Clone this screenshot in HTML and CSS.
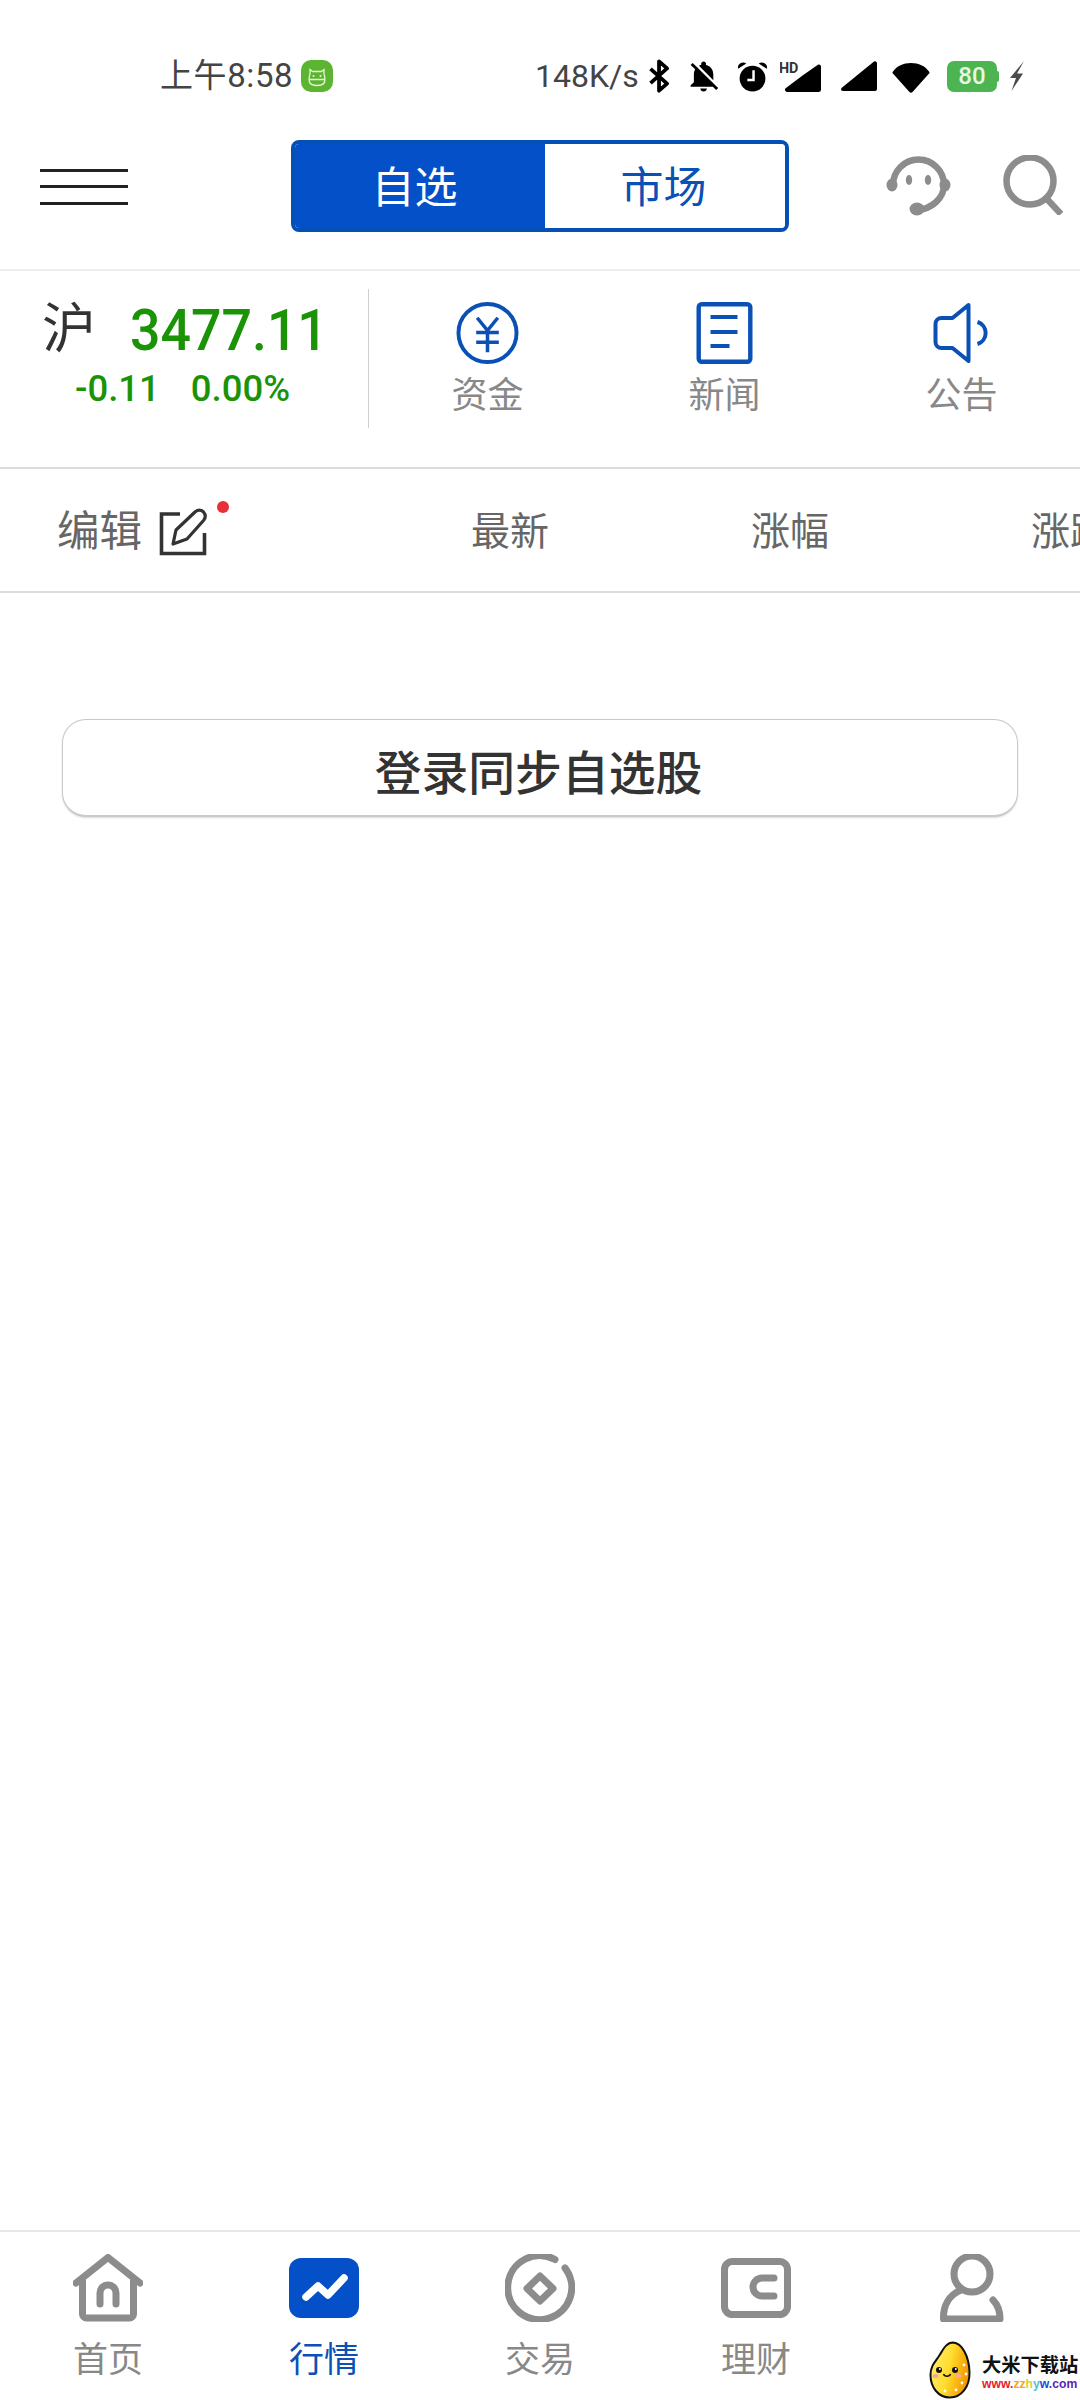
FILE: index.html
```html
<!DOCTYPE html>
<html lang="zh-CN">
<head>
<meta charset="utf-8">
<title>行情</title>
<link rel="stylesheet" href="styles.css">
</head>
<body>
<div class="page">
  <div class="status">
    <span class="time">上午8:58</span>
    <svg class="app-badge" viewBox="0 0 32 32">
      <rect width="32" height="32" rx="10" fill="#5cb531"/>
      <path d="M9 9.500l2.500 2h9l2.500-2v5c1.200 2 1.200 7 0 8.500-1.500 2-3.500 2.500-7 2.500s-5.500-.5-7-2.500c-1.200-1.500-1.200-6.500 0-8.500z M7.800 19.500h16.400" fill="none" stroke="#e8f6d8" stroke-width="1.300"/>
      <circle cx="12.500" cy="16" r="1" fill="#e8f6d8"/><circle cx="19.500" cy="16" r="1" fill="#e8f6d8"/>
    </svg>
    <span class="speed">148K/s</span>
    <svg class="si si-bt" viewBox="0 0 24 36"><path d="M2.500 10.500L20 26l-8.500 7.500V2.500L20 10 2.500 25.500" fill="none" stroke="#000" stroke-width="4" stroke-linejoin="round"/></svg>
    <svg class="si si-bell" viewBox="3 1.500 18.500 21.500" preserveAspectRatio="none"><path d="M20 18.690L7.840 6.140 5.270 3.490 4 4.760l2.800 2.800v.01c-.52.99-.8 2.160-.8 3.420v5l-2 2v1h13.730l2 2L21 19.720l-1-1.030zM12 22c1.110 0 2-.89 2-2h-4c0 1.110.89 2 2 2zm6-7.320V11c0-3.080-1.640-5.640-4.500-6.320V4c0-.83-.67-1.500-1.500-1.500s-1.500.67-1.500 1.500v.68c-.15.03-.29.08-.42.12-.1.03-.2.07-.3.11h-.01c-.2.08-.4.17-.59.27-.01 0-.01 0-.02.01L18 14.680z"/></svg>
    <svg class="si si-alarm" viewBox="0 0 30 32">
      <circle cx="15" cy="18" r="12.500"/>
      <path d="M1 8.500a5 5 0 0 1 8-5zM29 8.500a5 5 0 0 0-8-5z"/>
      <path d="M16 10v9.500h-6" fill="none" stroke="#fff" stroke-width="2.400"/>
    </svg>
    <svg class="si si-hd" viewBox="0 0 40 32">
      <path d="M37 4.500a2 2 0 0 1 3 1.500V29a2 2 0 0 1-2 2H7c-2 0-3-2-1.500-3.500L22 15z" fill="#000"/>
      <text x="-1" y="13" class="hd-text">HD</text>
    </svg>
    <svg class="si si-sig" viewBox="0 0 36 32"><path d="M33 1.500a2 2 0 0 1 3 1.500v26a2 2 0 0 1-2 2H2c-2 0-2.500-2-1.200-3.300z"/></svg>
    <svg class="si si-wifi" viewBox="0 0 37 32"><path d="M.8 11.300C5 5.500 11 2.800 18.500 2.800s13.500 2.700 17.700 8.500c.5.700.4 1.300-.1 1.900L20 31c-.9 1-2.100 1-3 0L.9 13.200c-.5-.6-.6-1.200-.1-1.900z"/></svg>
    <span class="battery"><span class="battery-num">80</span></span>
    <svg class="si si-bolt" viewBox="0 0 18 32"><path d="M17 1L3 18h6l-4.500 13L16 13.500h-6z" fill="#4a4a4a"/></svg>
  </div>

  <header class="topbar">
    <div class="burger"><i></i><i></i><i></i></div>
    <div class="segment">
      <span class="seg seg-on">自选</span>
      <span class="seg seg-off">市场</span>
    </div>
    <svg class="headset" viewBox="0 0 65 63">
      <path d="M7 32A25.500 25.500 0 1 1 58 32C58 45 46 56 31 57" fill="none" stroke="#8c8c8c" stroke-width="6.500"/>
      <ellipse cx="6" cy="32" rx="5.500" ry="6.500" fill="#8c8c8c"/>
      <ellipse cx="59" cy="32" rx="5.500" ry="6.500" fill="#8c8c8c"/>
      <ellipse cx="31" cy="56" rx="7.500" ry="6.500" fill="#8c8c8c"/>
      <ellipse cx="23" cy="27" rx="3.200" ry="5" fill="#8c8c8c"/>
      <ellipse cx="42" cy="27" rx="3.200" ry="5" fill="#8c8c8c"/>
    </svg>
    <svg class="search" viewBox="0 0 60 60">
      <circle cx="27" cy="26" r="23.500" fill="none" stroke="#8c8c8c" stroke-width="6.500"/>
      <path d="M44 44l14 15" fill="none" stroke="#8c8c8c" stroke-width="6.500"/>
    </svg>
  </header>

  <section class="index-row">
    <div class="index-box">
      <div class="index-top"><span class="index-name">沪</span><span class="index-value">3477.11</span></div>
      <div class="index-change"><span class="chg">-0.11</span><span class="chg">0.00%</span></div>
    </div>
    <div class="shortcut">
      <svg class="sc-icon" viewBox="0 0 63 63">
        <circle cx="31.500" cy="31.500" r="29.500" fill="none" stroke="#0a50b5" stroke-width="4"/>
        <path d="M21 16l10.500 13L42 16M20 31h23M20 41h23M31.500 30v21" fill="none" stroke="#0a50b5" stroke-width="3.600"/>
      </svg>
      <span class="sc-label">资金</span>
    </div>
    <div class="shortcut">
      <svg class="sc-icon" viewBox="0 0 56 62">
        <rect x="2.200" y="2.200" width="51.600" height="57.600" rx="3" fill="none" stroke="#0a50b5" stroke-width="4.400"/>
        <path d="M14 15h27M14 30h27M14 44h19" fill="none" stroke="#0a50b5" stroke-width="3.800"/>
      </svg>
      <span class="sc-label">新闻</span>
    </div>
    <div class="shortcut">
      <svg class="sc-icon" viewBox="0 0 56 62">
        <path d="M35 3L19 16H8a6 6 0 0 0-6 6v18a6 6 0 0 0 6 6H19L35 59z" fill="none" stroke="#0a50b5" stroke-width="4" stroke-linejoin="round"/>
        <path d="M44 20a11.500 11.500 0 0 1 0 22" fill="none" stroke="#0a50b5" stroke-width="4"/>
      </svg>
      <span class="sc-label">公告</span>
    </div>
  </section>

  <nav class="columns">
    <div class="col-edit">
      <span class="edit-label">编辑</span>
      <span class="edit-icon-wrap">
        <svg class="edit-icon" viewBox="0 0 48 48">
          <path d="M21 6H2.500V45.500H45.500V25" fill="none" stroke="#333" stroke-width="3.600"/>
          <path d="M14 36l3-14L36 4c3-2.500 6-2.500 8.500 0 2.500 3 2.500 5.500 0 8.500L28 31z" fill="none" stroke="#333" stroke-width="3.200" stroke-linejoin="round"/>
        </svg>
        <i class="red-dot"></i>
      </span>
    </div>
    <span class="col">最新</span>
    <span class="col">涨幅</span>
    <span class="col">涨跌</span>
  </nav>

  <main class="content">
    <button class="sync-btn">登录同步自选股</button>
  </main>

  <footer class="tabbar">
    <div class="tab">
      <svg class="tab-icon" viewBox="0 0 70 68">
        <path d="M3 29L35 3.500 67 29" fill="none" stroke="#8c8c8c" stroke-width="7" stroke-linejoin="round" stroke-linecap="round"/>
        <path d="M9.500 26V60a4 4 0 0 0 4 4h43a4 4 0 0 0 4-4V26" fill="none" stroke="#8c8c8c" stroke-width="7"/>
        <path d="M27 50V39a8 8 0 0 1 16 0V50" fill="none" stroke="#8c8c8c" stroke-width="7" stroke-linecap="round"/>
      </svg>
      <span class="tab-label">首页</span>
    </div>
    <div class="tab tab-on">
      <svg class="tab-icon" viewBox="0 0 70 68">
        <rect y="4" width="70" height="60" rx="12" fill="#0450c8"/>
        <path d="M17 43L29 32 39 41 55 24" fill="none" stroke="#fff" stroke-width="7.500" stroke-linecap="round" stroke-linejoin="round"/>
      </svg>
      <span class="tab-label">行情</span>
    </div>
    <div class="tab">
      <svg class="tab-icon" viewBox="0 0 70 68">
        <path d="M50 5.500A32 32 0 1 0 60 14" fill="none" stroke="#8c8c8c" stroke-width="7" stroke-linecap="round"/>
        <path d="M35 22L48 34.500 35 47 22 34.500z" fill="none" stroke="#8c8c8c" stroke-width="7" stroke-linejoin="round"/>
      </svg>
      <span class="tab-label">交易</span>
    </div>
    <div class="tab">
      <svg class="tab-icon" viewBox="0 0 70 68">
        <rect x="3.500" y="7.500" width="63" height="53" rx="8" fill="none" stroke="#8c8c8c" stroke-width="7"/>
        <path d="M53 24H41a9 9 0 0 0 0 18H53" fill="none" stroke="#8c8c8c" stroke-width="7" stroke-linecap="round"/>
      </svg>
      <span class="tab-label">理财</span>
    </div>
    <div class="tab">
      <svg class="tab-icon" viewBox="0 0 70 68">
        <circle cx="35" cy="20" r="18" fill="none" stroke="#8c8c8c" stroke-width="7"/>
        <path d="M24 36C12 41 6 52 6.500 65H63C63 57 60 50 56 46" fill="none" stroke="#8c8c8c" stroke-width="7" stroke-linecap="round" stroke-linejoin="round"/>
      </svg>
    </div>
  </footer>

  <div class="watermark">
    <svg class="mango" viewBox="0 0 42 58">
      <defs>
        <linearGradient id="mg" x1="0" y1="0" x2="1" y2="0.300">
          <stop offset="0" stop-color="#fff27a"/>
          <stop offset="0.550" stop-color="#ffdd2e"/>
          <stop offset="1" stop-color="#f59d00"/>
        </linearGradient>
      </defs>
      <path d="M24 1.500C33 2 40 15 40.500 31 41 46 32 56.500 21 56.500 9 56.500 1.500 46 1.500 34 1.500 25 6 21 10 15 14 9 17 1.500 24 1.500z" fill="url(#mg)" stroke="#111" stroke-width="2"/>
      <circle cx="10" cy="29" r="3" fill="#111"/><circle cx="26" cy="29" r="3" fill="#111"/>
      <circle cx="10.800" cy="28" r="1" fill="#fff"/><circle cx="26.800" cy="28" r="1" fill="#fff"/>
      <path d="M14.500 33c1 3 6 3 7 0" fill="none" stroke="#111" stroke-width="1.600"/>
      <ellipse cx="6.500" cy="35" rx="3" ry="2" fill="#f7a7a0"/><ellipse cx="29.500" cy="35" rx="3" ry="2" fill="#f7a7a0"/>
      <circle cx="35" cy="24" r="1.400" fill="#fff"/><circle cx="37" cy="33" r="1.400" fill="#fff"/>
      <circle cx="33" cy="42" r="1.400" fill="#fff"/><circle cx="27" cy="49" r="1.400" fill="#fff"/><circle cx="16" cy="50" r="1.400" fill="#fff"/>
    </svg>
    <div class="wm-text">
      <span class="wm-title">大米下载站</span>
      <span class="wm-url"><b class="u1">www.</b><b class="u2">zz</b><b class="u3">h</b><b class="u4">y</b><b class="u5">w</b><b class="u6">.com</b></span>
    </div>
  </div>
</div>
</body>
</html>
```
FILE: styles.css
```css
* { box-sizing: border-box; }
html, body { margin: 0; padding: 0; background: #fff; }
.page {
  position: relative;
  width: 1080px;
  height: 2400px;
  overflow: hidden;
  display: flex;
  flex-direction: column;
  background: #fff;
  font-family: Roboto, "Noto Sans CJK SC", sans-serif;
}

/* status bar */
.status {
  height: 100px;
  padding: 52px 0 0 160px;
  display: flex;
  align-items: center;
  flex: none;
}
.time { font-size: 33px; color: #444; line-height: 48px; width: 141px; white-space: nowrap; letter-spacing: .6px; }
.app-badge { width: 32px; height: 32px; }
.speed { font-size: 32px; color: #444; line-height: 48px; margin-left: 202px; width: 113px; white-space: nowrap; }
.si { display: block; fill: #000; flex: none; }
.si-bt { width: 23px; height: 34px; }
.si-bell { width: 30px; height: 33px; margin-left: 18px; }
.si-alarm { width: 31px; height: 33px; margin-left: 18px; }
.si-hd { width: 41px; height: 33px; margin-left: 12px; }
.hd-text { font-family: Roboto, sans-serif; font-size: 14px; font-weight: 700; fill: #333; }
.si-sig { width: 36px; height: 32px; margin-left: 20px; }
.si-wifi { width: 38px; height: 33px; margin-left: 15px; }
.battery {
  width: 50px; height: 31px; margin-left: 17px;
  background: #4cb551;
  border-radius: 7px;
  display: flex; align-items: center; justify-content: center;
  position: relative;
}
.battery::after {
  content: "";
  position: absolute; right: -2px; top: 10px;
  width: 2px; height: 11px;
  background: #4cb551;
  border-radius: 0 2px 2px 0;
}
.battery-num { font-size: 24px; font-weight: 500; color: #e9f7e4; line-height: 1; }
.si-bolt { width: 18px; height: 32px; margin-left: 10px; }

/* top bar */
.topbar {
  height: 171px;
  flex: none;
  display: flex;
  align-items: center;
  padding: 2px 0 0 40px;
  border-bottom: 2px solid #eeeeee;
}
.burger { width: 88px; height: 36px; display: flex; flex-direction: column; justify-content: space-between; flex: none; margin-top: 2px; }
.burger i { display: block; height: 3px; background: #222; }
.segment {
  width: 498px; height: 92px; margin-left: 163px; flex: none;
  display: flex;
  border-radius: 8px;
  overflow: hidden;
  border: 4px solid #0550b4;
}
.seg { display: flex; align-items: center; justify-content: center; font-size: 43px; line-height: 1; padding-top: 6px; }
.seg-on { width: 250px; background: #0450c8; color: #fff; padding-right: 11px; }
.seg-off { flex: 1; background: #fff; color: #0a50b5; padding-right: 3px; }
.headset { width: 65px; height: 63px; margin-left: 97px; flex: none; margin-top: -2px; }
.search { width: 60px; height: 60px; margin-left: 52px; flex: none; margin-top: -2px; }

/* index row */
.index-row {
  height: 198px;
  flex: none;
  display: flex;
  align-items: flex-start;
  border-bottom: 2px solid #dcdcdc;
  padding-top: 18px;
}
.index-box {
  width: 369px; height: 139px; flex: none;
  border-right: 1px solid #cfcfcf;
  padding: 16px 0 0 42px;
}
.index-top { display: flex; align-items: center; height: 50px; }
.index-name { font-size: 54px; color: #333; line-height: 50px; width: 88px; flex: none; }
.index-value { display: inline-block; font-size: 58px; font-weight: 500; color: #1a9406; line-height: 50px; transform: scaleX(.925); transform-origin: left center; }
.index-change { display: flex; gap: 31px; margin: 13px 0 0 33px; font-size: 36.500px; font-weight: 500; color: #1a9406; line-height: 42px; }
.chg { display: inline-block; }
.shortcut { width: 237px; flex: none; display: flex; flex-direction: column; align-items: center; padding-top: 13px; }
.sc-icon { height: 62px; width: 63px; display: block; }
.sc-label { font-size: 36px; color: #888; line-height: 46px; margin-top: 9px; }

/* column headers */
.columns {
  height: 124px;
  flex: none;
  display: flex;
  align-items: center;
  padding-top: 3px;
  overflow: hidden;
  border-bottom: 2px solid #dcdcdc;
}
.col-edit { width: 370px; flex: none; display: flex; align-items: center; padding-left: 57px; }
.edit-label { font-size: 42.500px; color: #666; line-height: 50px; }
.edit-icon-wrap { position: relative; margin-left: 17px; display: block; width: 48px; height: 48px; }
.edit-icon { width: 48px; height: 48px; display: block; }
.red-dot {
  position: absolute; left: 58px; top: -7px;
  width: 12px; height: 12px;
  border-radius: 50%;
  background: #e5303a;
}
.col { width: 280px; flex: none; text-align: center; font-size: 39px; color: #666; line-height: 50px; }

/* content */
.content { flex: 1; padding: 126px 62px 0; }
.sync-btn {
  display: block;
  width: 956px; height: 98px;
  padding: 4px 3px 0 0;
  background: #fff;
  border: 1px solid #c9c9c9;
  border-bottom-width: 2px;
  box-shadow: 0 1px 2px #dddddd;
  border-radius: 24px;
  font-family: inherit;
  font-size: 46.800px;
  font-weight: 500;
  color: #333;
}

/* tab bar */
.tabbar {
  height: 170px;
  flex: none;
  display: flex;
  border-top: 2px solid #e8e8e8;
}
.tab { width: 216px; flex: none; display: flex; flex-direction: column; align-items: center; padding-top: 22px; }
.tab-icon { width: 70px; height: 68px; display: block; }
.tab-label { font-size: 35px; line-height: 44px; margin-top: 17px; color: #888; }
.tab-on .tab-label { color: #0a50b5; }

/* watermark */
.watermark {
  position: absolute;
  left: 929px; top: 2341px;
  width: 151px; height: 59px;
  display: flex;
  background: #fff;
}
.mango { width: 42px; height: 58px; flex: none; }
.wm-text { display: flex; flex-direction: column; margin-left: 11px; padding-top: 11px; }
.wm-title { font-family: "Noto Sans CJK SC", sans-serif; font-size: 19.300px; font-weight: 700; color: #111; line-height: 24px; white-space: nowrap; }
.wm-url { font-family: "Liberation Sans", sans-serif; font-size: 12.200px; line-height: 17px; white-space: nowrap; }
.wm-url b { font-weight: 700; }
.u1 { color: #e8202a; }
.u2 { color: #f2a51e; }
.u3 { color: #d8d422; }
.u4 { color: #49c6d8; }
.u5 { color: #1e46d8; }
.u6 { color: #5a1fb8; }
```
